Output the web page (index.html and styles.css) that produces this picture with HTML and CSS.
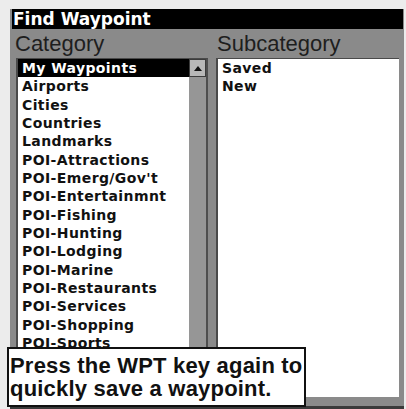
FILE: index.html
```html
<!DOCTYPE html>
<html>
<head>
<meta charset="utf-8">
<link rel="stylesheet" href="styles.css">
</head>
<body>
<div class="screen">
  <div class="titlebar">Find Waypoint</div>
  <div class="panes">
    <div class="pane pane-left">
      <div class="label label-left">Category</div>
      <div class="catbox">
        <ul class="list">
          <li class="sel">My Waypoints</li>
          <li>Airports</li>
          <li>Cities</li>
          <li>Countries</li>
          <li>Landmarks</li>
          <li>POI-Attractions</li>
          <li>POI-Emerg/Gov't</li>
          <li>POI-Entertainmnt</li>
          <li>POI-Fishing</li>
          <li>POI-Hunting</li>
          <li>POI-Lodging</li>
          <li>POI-Marine</li>
          <li>POI-Restaurants</li>
          <li>POI-Services</li>
          <li>POI-Shopping</li>
          <li>POI-Sports</li>
        </ul>
        <div class="scrollbar">
          <div class="scrollbtn"><span class="tri"></span></div>
        </div>
      </div>
    </div>
    <div class="pane pane-right">
      <div class="label label-right">Subcategory</div>
      <div class="subbox">
        <ul class="list sublist">
          <li>Saved</li>
          <li>New</li>
        </ul>
      </div>
    </div>
  </div>
  <div class="popup">
    <div class="popup-text">Press the WPT key again to<br>quickly save a waypoint.</div>
  </div>
</div>
</body>
</html>
```

FILE: styles.css
```css
html, body {
  margin: 0;
  padding: 0;
}
body {
  width: 406px;
  height: 409px;
  background: #ececec;
  overflow: hidden;
  position: relative;
}
.screen {
  position: absolute;
  left: 10px;
  top: 9px;
  width: 394px;
  height: 400px;
  background: #8a8a8a;
  display: flex;
  flex-direction: column;
  box-sizing: border-box;
  padding: 0 1px 0 2px;
  border-bottom: 3px solid #3a3a3a;
}
.titlebar {
  height: 20px;
  background: #000;
  color: #fff;
  font-family: "DejaVu Sans", sans-serif;
  font-weight: bold;
  font-size: 17px;
  line-height: 20px;
  padding-left: 1px;
  white-space: nowrap;
}
.panes {
  flex: 1;
  display: flex;
  padding-left: 4px;
  gap: 8px;
  min-height: 0;
}
.pane {
  display: flex;
  flex-direction: column;
  min-height: 0;
}
.pane-left {
  width: 192px;
}
.pane-right {
  width: 183px;
}
.label {
  height: 29px;
  box-sizing: border-box;
  padding-top: 1px;
  font-family: "Liberation Sans", Arial, sans-serif;
  font-size: 22px;
  line-height: 28px;
  color: #1e1e1e;
  white-space: nowrap;
}
.label-left {
  margin-left: -1px;
}
.label-right {
  margin-left: 1px;
}
.catbox {
  flex: 1;
  display: flex;
  background: #fff;
  border-left: 2px solid #4a4a4a;
  border-top: 1px solid #4a4a4a;
  min-height: 0;
  overflow: hidden;
}
.list {
  list-style: none;
  margin: 0;
  padding: 0;
  font-family: "DejaVu Sans", sans-serif;
  font-weight: bold;
  font-size: 14px;
  line-height: 18.33px;
  letter-spacing: 0.4px;
  color: #111;
  white-space: nowrap;
}
.catbox .list {
  flex: 1;
  min-width: 0;
}
.list li {
  padding-left: 4px;
}
.list li.sel {
  background: #000;
  color: #fff;
}
.scrollbar {
  width: 17px;
  background: #969696;
  border-right: 2px solid #4e4e4e;
  flex: none;
}
.scrollbtn {
  height: 18px;
  box-sizing: border-box;
  background: #b8b8b8;
  border: 1px solid #3c3c3c;
  display: flex;
  align-items: center;
  justify-content: center;
}
.tri {
  width: 0;
  height: 0;
  border-left: 4.5px solid transparent;
  border-right: 4.5px solid transparent;
  border-bottom: 5px solid #111;
}
.subbox {
  height: 339px;
  background: #fff;
  border-left: 2px solid #4a4a4a;
  border-top: 1px solid #4a4a4a;
  box-sizing: border-box;
}
.sublist li {
  padding-left: 4px;
}
.popup {
  position: absolute;
  left: -3px;
  top: 338px;
  width: 299px;
  height: 60px;
  box-sizing: border-box;
  background: #fff;
  border: 2px solid #111;
}
.popup-text {
  padding: 5px 0 0 1px;
  font-family: "Liberation Sans", Arial, sans-serif;
  font-weight: bold;
  font-size: 22px;
  line-height: 23px;
  letter-spacing: 0.2px;
  color: #111;
  white-space: nowrap;
}
```
